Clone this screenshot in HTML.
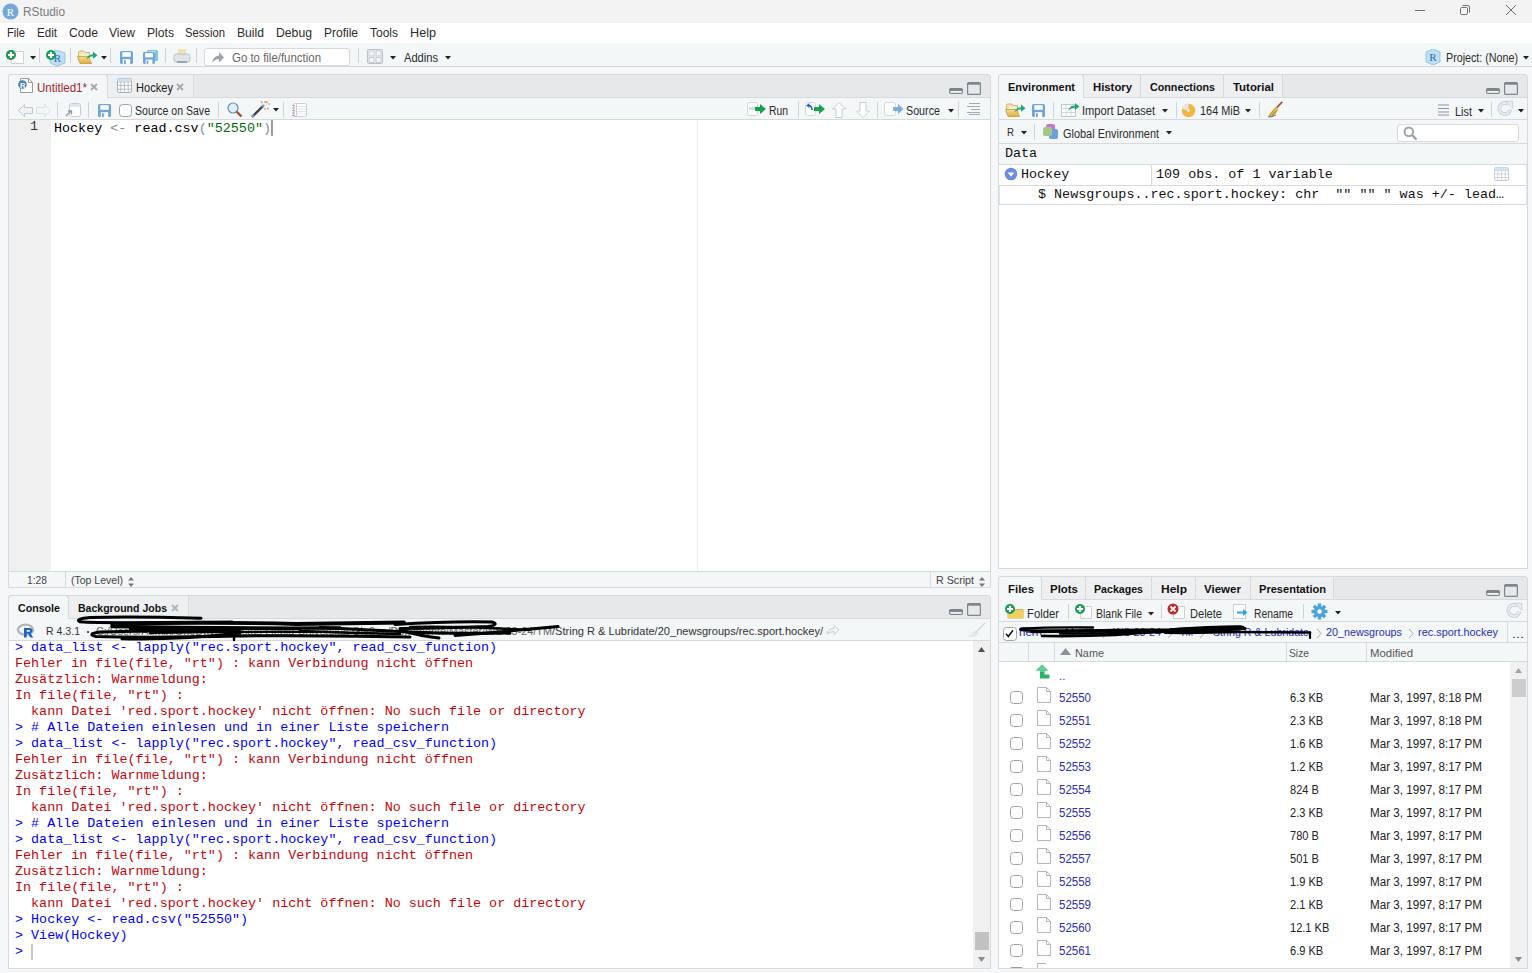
<!DOCTYPE html>
<html><head><meta charset="utf-8"><title>RStudio</title>
<style>
html,body{margin:0;padding:0;}
body{width:1532px;height:973px;position:relative;overflow:hidden;background:#f6f7f9;font-family:'Liberation Sans',sans-serif;}
body>div,body>svg{position:absolute;}
.t{overflow:visible}
</style></head><body>
<div style="left:0px;top:0px;width:1532px;height:23px;background:#f3f3f3;"></div>
<svg style="left:2px;top:3px" width="17" height="17" viewBox="0 0 17 17"><circle cx="8.5" cy="8.5" r="8" fill="#75a8da"/><text x="8.5" y="12.6" font-family="Liberation Serif" font-size="11" fill="#fff" text-anchor="middle">R</text></svg>
<div class="t" style="left:23px;top:6px;font:normal 12.5px 'Liberation Sans',sans-serif;color:#7b7b7b;line-height:1;white-space:pre;transform:scaleX(0.9442);transform-origin:0 0;">RStudio</div>
<div style="left:1415px;top:10px;width:10px;height:1px;background:#707070;"></div>
<svg style="left:1459px;top:4px" width="13" height="13" viewBox="0 0 13 13"><rect x="1.5" y="3.5" width="7" height="7" rx="1.2" fill="none" stroke="#707070"/><path d="M3.5 1.5h5.5a1.5 1.5 0 0 1 1.5 1.5v5.5" fill="none" stroke="#707070"/></svg>
<svg style="left:1505px;top:4px" width="13" height="13" viewBox="0 0 13 13"><path d="M1 1L11 11M11 1L1 11" stroke="#707070" stroke-width="1"/></svg>
<div style="left:0px;top:23px;width:1532px;height:20px;background:#ffffff;"></div>
<div class="t" style="left:7px;top:27px;font:normal 12px 'Liberation Sans',sans-serif;color:#2b2b2b;line-height:1;white-space:pre;transform:scaleX(0.9305);transform-origin:0 0;">File</div>
<div class="t" style="left:37px;top:27px;font:normal 12px 'Liberation Sans',sans-serif;color:#2b2b2b;line-height:1;white-space:pre;transform:scaleX(0.9668);transform-origin:0 0;">Edit</div>
<div class="t" style="left:69px;top:27px;font:normal 12px 'Liberation Sans',sans-serif;color:#2b2b2b;line-height:1;white-space:pre;transform:scaleX(1.0109);transform-origin:0 0;">Code</div>
<div class="t" style="left:109px;top:27px;font:normal 12px 'Liberation Sans',sans-serif;color:#2b2b2b;line-height:1;white-space:pre;transform:scaleX(1.0079);transform-origin:0 0;">View</div>
<div class="t" style="left:147px;top:27px;font:normal 12px 'Liberation Sans',sans-serif;color:#2b2b2b;line-height:1;white-space:pre;transform:scaleX(1.0117);transform-origin:0 0;">Plots</div>
<div class="t" style="left:185px;top:27px;font:normal 12px 'Liberation Sans',sans-serif;color:#2b2b2b;line-height:1;white-space:pre;transform:scaleX(0.9367);transform-origin:0 0;">Session</div>
<div class="t" style="left:237px;top:27px;font:normal 12px 'Liberation Sans',sans-serif;color:#2b2b2b;line-height:1;white-space:pre;transform:scaleX(1.0117);transform-origin:0 0;">Build</div>
<div class="t" style="left:276px;top:27px;font:normal 12px 'Liberation Sans',sans-serif;color:#2b2b2b;line-height:1;white-space:pre;transform:scaleX(1.0177);transform-origin:0 0;">Debug</div>
<div class="t" style="left:324px;top:27px;font:normal 12px 'Liberation Sans',sans-serif;color:#2b2b2b;line-height:1;white-space:pre;transform:scaleX(0.9995);transform-origin:0 0;">Profile</div>
<div class="t" style="left:370px;top:27px;font:normal 12px 'Liberation Sans',sans-serif;color:#2b2b2b;line-height:1;white-space:pre;transform:scaleX(0.9994);transform-origin:0 0;">Tools</div>
<div class="t" style="left:410px;top:27px;font:normal 12px 'Liberation Sans',sans-serif;color:#2b2b2b;line-height:1;white-space:pre;transform:scaleX(1.0532);transform-origin:0 0;">Help</div>
<div style="left:0px;top:43px;width:1532px;height:23px;background:#f3f7f8;"></div>
<div style="left:0px;top:66px;width:1532px;height:1px;background:#d3d7db;"></div>
<div style="left:8px;top:74px;width:983px;height:514px;background:#d6dadd;border-radius:4px 4px 0 0;"></div>
<div style="left:9px;top:75px;width:981px;height:22px;background:#e7e8ea;border-radius:3px 3px 0 0;"></div>
<div style="left:9px;top:97px;width:981px;height:1px;background:#d6dadd;"></div>
<div style="left:9px;top:98px;width:981px;height:21px;background:#f3f7f8;"></div>
<div style="left:9px;top:119px;width:981px;height:1px;background:#d6dadd;"></div>
<div style="left:9px;top:120px;width:42px;height:451px;background:#f0f0f0;"></div>
<div style="left:51px;top:120px;width:939px;height:451px;background:#ffffff;"></div>
<div style="left:697px;top:120px;width:1px;height:451px;background:#ebebeb;"></div>
<div style="left:9px;top:571px;width:981px;height:1px;background:#d6dadd;"></div>
<div style="left:9px;top:572px;width:981px;height:15px;background:#f3f7f8;"></div>
<div style="left:65px;top:572px;width:1px;height:15px;background:#d6dadd;"></div>
<div style="left:930px;top:572px;width:1px;height:15px;background:#d6dadd;"></div>
<div style="left:8px;top:595px;width:983px;height:374px;background:#d6dadd;border-radius:4px 4px 0 0;"></div>
<div style="left:9px;top:596px;width:981px;height:22px;background:#e7e8ea;border-radius:3px 3px 0 0;"></div>
<div style="left:9px;top:618px;width:981px;height:1px;background:#d6dadd;"></div>
<div style="left:9px;top:619px;width:981px;height:21px;background:#f3f7f8;"></div>
<div style="left:9px;top:640px;width:981px;height:1px;background:#d6dadd;"></div>
<div style="left:9px;top:641px;width:981px;height:327px;background:#ffffff;"></div>
<div style="left:973px;top:641px;width:17px;height:327px;background:#f0f0f0;"></div>
<div style="left:998px;top:74px;width:530px;height:495px;background:#d6dadd;border-radius:4px 4px 0 0;"></div>
<div style="left:999px;top:75px;width:528px;height:22px;background:#e7e8ea;border-radius:3px 3px 0 0;"></div>
<div style="left:999px;top:97px;width:528px;height:1px;background:#d6dadd;"></div>
<div style="left:999px;top:98px;width:528px;height:21px;background:#f3f7f8;"></div>
<div style="left:999px;top:119px;width:528px;height:1px;background:#d6dadd;"></div>
<div style="left:999px;top:120px;width:528px;height:23px;background:#f3f7f8;"></div>
<div style="left:999px;top:143px;width:528px;height:1px;background:#d6dadd;"></div>
<div style="left:999px;top:144px;width:528px;height:20px;background:#f3f7f8;"></div>
<div style="left:999px;top:164px;width:528px;height:1px;background:#d6dadd;"></div>
<div style="left:999px;top:165px;width:528px;height:403px;background:#ffffff;"></div>
<div style="left:999px;top:185px;width:528px;height:1px;background:#d6dadd;"></div>
<div style="left:999px;top:204px;width:528px;height:1px;background:#d6dadd;"></div>
<div style="left:998px;top:576px;width:530px;height:393px;background:#d6dadd;border-radius:4px 4px 0 0;"></div>
<div style="left:999px;top:577px;width:528px;height:22px;background:#e7e8ea;border-radius:3px 3px 0 0;"></div>
<div style="left:999px;top:599px;width:528px;height:1px;background:#d6dadd;"></div>
<div style="left:999px;top:600px;width:528px;height:21px;background:#f3f7f8;"></div>
<div style="left:999px;top:621px;width:528px;height:1px;background:#d6dadd;"></div>
<div style="left:999px;top:622px;width:528px;height:20px;background:#f3f7f8;"></div>
<div style="left:999px;top:642px;width:528px;height:1px;background:#d6dadd;"></div>
<div style="left:999px;top:643px;width:528px;height:18px;background:#f3f7f8;"></div>
<div style="left:999px;top:661px;width:528px;height:1px;background:#d6dadd;"></div>
<div style="left:999px;top:662px;width:528px;height:306px;background:#ffffff;"></div>
<div style="left:1510px;top:662px;width:17px;height:306px;background:#f1f1f1;"></div>
<svg style="left:5px;top:49px" width="12" height="12" viewBox="0 0 12 12"><circle cx="6" cy="6" r="5" fill="#1e9b57"/><path d="M6 3.0V9.0M3.0 6H9.0" stroke="#fff" stroke-width="2.2"/></svg>
<svg style="left:11px;top:51px" width="13" height="13" viewBox="0 0 13 13"><path d="M0.5 0.5H12.5L12.5 0.5V12.5H0.5Z" fill="#fff" stroke="#cfcfcf"/><path d="M12.5 0.5V0.5H12.5" fill="none" stroke="#cfcfcf"/></svg>
<svg style="left:5px;top:49px" width="12" height="12" viewBox="0 0 12 12"><circle cx="6" cy="6" r="5" fill="#1e9b57"/><path d="M6 3.0V9.0M3.0 6H9.0" stroke="#fff" stroke-width="2.2"/></svg>
<svg style="left:30px;top:56px" width="6" height="4" viewBox="0 0 6 4"><path d="M0 0H6L3 3.5Z" fill="#222"/></svg>
<div style="left:39px;top:48px;width:1px;height:15px;background:#d0d4d8;"></div>
<svg style="left:49px;top:50px" width="17" height="17" viewBox="0 0 17 17"><path d="M1 3L8 0L16 3V13L8 16L1 13Z" fill="#bfe0f3" stroke="#7fc0e2" stroke-width="0.8"/><text x="8.5" y="12" font-family="Liberation Serif" font-size="11" fill="#2f6aa6" text-anchor="middle">R</text></svg>
<svg style="left:45px;top:49px" width="12" height="12" viewBox="0 0 12 12"><circle cx="6" cy="6" r="5" fill="#1e9b57"/><path d="M6 3.0V9.0M3.0 6H9.0" stroke="#fff" stroke-width="2.2"/></svg>
<div style="left:70px;top:48px;width:1px;height:15px;background:#d0d4d8;"></div>
<svg style="left:77px;top:50px" width="21" height="14" viewBox="0 0 21 14"><defs><linearGradient id="fg" x1="0" y1="0" x2="0" y2="1"><stop offset="0" stop-color="#f6df8e"/><stop offset="1" stop-color="#dcae3c"/></linearGradient></defs><path d="M1.5 2.5Q1.5 1 3 1H7L8.5 2.5H12.5V9H1.5Z" fill="#f5e6b0" stroke="#c9a445" stroke-width="0.8"/><path d="M3.5 3.5H11.5V9H3.5Z" fill="#ececec"/><path d="M0.5 6.5H11.5L14.5 13.5H3Z" fill="url(#fg)" stroke="#c59a35" stroke-width="0.8"/><path d="M9 9.5Q11 4.5 16 4.2V1.5L20.5 5.2L16 8.8V6.3Q12.5 6.3 9 9.5Z" fill="#1fa77a"/></svg>
<svg style="left:101px;top:56px" width="6" height="4" viewBox="0 0 6 4"><path d="M0 0H6L3 3.5Z" fill="#222"/></svg>
<div style="left:110px;top:48px;width:1px;height:15px;background:#d0d4d8;"></div>
<svg style="left:120px;top:51px" width="13" height="13" viewBox="0 0 13 13"><g transform="scale(1.000)"><rect x="0" y="0" width="13" height="13" rx="1.6" fill="#6fa5d7"/><rect x="2.3" y="1.2" width="8.4" height="4.6" fill="#fff"/><rect x="2.8" y="8.2" width="7.4" height="4.8" fill="#fff"/><rect x="4" y="9.2" width="1.8" height="3.8" fill="#6fa5d7"/></g></svg>
<svg style="left:143px;top:50px" width="16" height="15" viewBox="0 0 16 15"><rect x="4" y="0" width="11" height="11" rx="1.2" fill="#7cc6ea"/><rect x="6" y="1.5" width="6" height="4" fill="#fff"/></svg>
<svg style="left:143px;top:52px" width="12" height="12" viewBox="0 0 12 12"><g transform="scale(0.923)"><rect x="0" y="0" width="13" height="13" rx="1.6" fill="#6fa5d7"/><rect x="2.3" y="1.2" width="8.4" height="4.6" fill="#fff"/><rect x="2.8" y="8.2" width="7.4" height="4.8" fill="#fff"/><rect x="4" y="9.2" width="1.8" height="3.8" fill="#6fa5d7"/></g></svg>
<div style="left:165px;top:48px;width:1px;height:15px;background:#d0d4d8;"></div>
<svg style="left:173px;top:48px" width="18" height="16" viewBox="0 0 18 16"><rect x="5" y="1" width="8" height="7" fill="#f1e3b3"/><rect x="1" y="6" width="16" height="8" rx="2" fill="#dfe4ea" stroke="#aeb6bf" stroke-width="0.8"/><rect x="4" y="13" width="10" height="2" fill="#9aa3ad"/></svg>
<div style="left:196px;top:48px;width:1px;height:15px;background:#d0d4d8;"></div>
<div style="left:204px;top:48px;width:146px;height:18px;background:#ffffff;border:1px solid #d5d9dd;border-radius:3px;box-sizing:border-box;"></div>
<svg style="left:211px;top:51px" width="14" height="13" viewBox="0 0 14 13"><path d="M1 12Q2 5 8 4.5V1L13 6.5L8 11.5V8Q4 8 1 12Z" fill="#9ba3ad"/></svg>
<div class="t" style="left:232px;top:52px;font:normal 12px 'Liberation Sans',sans-serif;color:#666;line-height:1;white-space:pre;transform:scaleX(0.9530);transform-origin:0 0;">Go to file/function</div>
<div style="left:358px;top:48px;width:1px;height:15px;background:#d0d4d8;"></div>
<svg style="left:367px;top:49px" width="16" height="15" viewBox="0 0 16 15"><rect x="0.5" y="0.5" width="15" height="14" rx="1" fill="none" stroke="#b9c0c7"/><rect x="2" y="2" width="5" height="5" fill="none" stroke="#c5cbd1"/><rect x="9" y="2" width="5" height="5" fill="none" stroke="#c5cbd1"/><rect x="2" y="8.5" width="5" height="5" fill="none" stroke="#c5cbd1"/><rect x="9" y="8.5" width="5" height="5" fill="none" stroke="#c5cbd1"/></svg>
<svg style="left:390px;top:56px" width="6" height="4" viewBox="0 0 6 4"><path d="M0 0H6L3 3.5Z" fill="#222"/></svg>
<div class="t" style="left:404px;top:52px;font:normal 12px 'Liberation Sans',sans-serif;color:#2b2b2b;line-height:1;white-space:pre;transform:scaleX(0.9264);transform-origin:0 0;">Addins</div>
<svg style="left:445px;top:56px" width="6" height="4" viewBox="0 0 6 4"><path d="M0 0H6L3 3.5Z" fill="#222"/></svg>
<svg style="left:1425px;top:49px" width="16" height="16" viewBox="0 0 16 16"><path d="M1 3L8 0L15 3V13L8 16L1 13Z" fill="#bfe0f3" stroke="#7fc0e2" stroke-width="0.8"/><text x="8" y="12" font-family="Liberation Serif" font-size="11" fill="#2f6aa6" text-anchor="middle">R</text></svg>
<div class="t" style="left:1446px;top:52px;font:normal 12px 'Liberation Sans',sans-serif;color:#2b2b2b;line-height:1;white-space:pre;transform:scaleX(0.8922);transform-origin:0 0;">Project: (None)</div>
<svg style="left:1523px;top:56px" width="6" height="4" viewBox="0 0 6 4"><path d="M0 0H6L3 3.5Z" fill="#222"/></svg>
<div style="left:8px;top:74px;width:100px;height:24px;background:#d6dadd;border-radius:4px 4px 0 0;"></div>
<div style="left:9px;top:75px;width:98px;height:23px;background:#f3f7f8;border-radius:3px 3px 0 0;"></div>
<div style="left:108px;top:75px;width:85px;height:22px;background:#eeeff1;"></div>
<div style="left:193px;top:75px;width:1px;height:22px;background:#d6dadd;"></div>
<svg style="left:20px;top:78px" width="13" height="15" viewBox="0 0 13 15"><path d="M0.5 0.5H8.5L12.5 4.5V14.5H0.5Z" fill="#fff" stroke="#9a9a9a"/><path d="M8.5 0.5V4.5H12.5" fill="none" stroke="#9a9a9a"/></svg>
<svg style="left:18px;top:80px" width="10" height="10" viewBox="0 0 10 10"><circle cx="4.5" cy="4.5" r="4.3" fill="#4a80be"/><text x="4.6" y="7.6" font-family="Liberation Sans" font-weight="bold" font-size="7.5" fill="#fff" text-anchor="middle">R</text></svg>
<div class="t" style="left:37px;top:82px;font:normal 12px 'Liberation Sans',sans-serif;color:#a3232e;line-height:1;white-space:pre;transform:scaleX(0.9610);transform-origin:0 0;">Untitled1*</div>
<svg style="left:90px;top:83px" width="8" height="8" viewBox="0 0 8 8"><path d="M1 1L7 7M7 1L1 7" stroke="#a9a9a9" stroke-width="1.8"/></svg>
<svg style="left:117px;top:78px" width="16" height="16" viewBox="0 0 16 16"><rect x="0.5" y="0.5" width="14" height="14" rx="1.5" fill="#fff" stroke="#a9b0b8"/><path d="M3.8 0V15M0 3.8H15" stroke="#a9b0b8" stroke-width="0.8"/><path d="M7.5 0V15M0 7.5H15" stroke="#a9b0b8" stroke-width="0.8"/><path d="M11.2 0V15M0 11.2H15" stroke="#a9b0b8" stroke-width="0.8"/><rect x="0.5" y="0.5" width="14" height="3" fill="#cfe3f5"/></svg>
<div class="t" style="left:136px;top:82px;font:normal 12px 'Liberation Sans',sans-serif;color:#222;line-height:1;white-space:pre;transform:scaleX(0.9246);transform-origin:0 0;">Hockey</div>
<svg style="left:176px;top:83px" width="8" height="8" viewBox="0 0 8 8"><path d="M1 1L7 7M7 1L1 7" stroke="#a9a9a9" stroke-width="1.8"/></svg>
<svg style="left:949px;top:82px" width="34" height="14" viewBox="0 0 34 14"><rect x="0.6" y="6.6" width="12.8" height="4.8" rx="1.2" fill="#fff" stroke="#7b868d" stroke-width="1.2"/><rect x="1" y="6.5" width="12" height="2.6" fill="#7b868d"/><rect x="18.6" y="0.6" width="12.8" height="11.8" rx="1" fill="none" stroke="#7b868d" stroke-width="1.2"/><rect x="19" y="0.5" width="12" height="2.2" fill="#7b868d"/></svg>
<svg style="left:18px;top:104px" width="33" height="13" viewBox="0 0 33 13"><path d="M0.5 6.5L6.5 0.5V3.5H14.5V9.5H6.5V12.5Z" fill="#f0f2f4" stroke="#c2c8ce"/><path d="M32.5 6.5L26.5 0.5V3.5H18.5V9.5H26.5V12.5Z" fill="#f3f5f7" stroke="#dde1e5"/></svg>
<div style="left:57px;top:102px;width:1px;height:16px;background:#d0d4d8;"></div>
<svg style="left:65px;top:103px" width="16" height="15" viewBox="0 0 16 15"><rect x="4.5" y="0.5" width="11" height="13" rx="2" fill="#fff" stroke="#c5ccd3"/><rect x="5" y="1" width="10" height="3" fill="#dbe6f0"/><path d="M1 13L6 8M3 8H6.5V11.5" stroke="#8e99a3" stroke-width="1.3" fill="none"/></svg>
<div style="left:88px;top:102px;width:1px;height:16px;background:#d0d4d8;"></div>
<svg style="left:98px;top:104px" width="13" height="13" viewBox="0 0 13 13"><g transform="scale(1.000)"><rect x="0" y="0" width="13" height="13" rx="1.6" fill="#6fa5d7"/><rect x="2.3" y="1.2" width="8.4" height="4.6" fill="#fff"/><rect x="2.8" y="8.2" width="7.4" height="4.8" fill="#fff"/><rect x="4" y="9.2" width="1.8" height="3.8" fill="#6fa5d7"/></g></svg>
<svg style="left:119px;top:104px" width="13" height="13" viewBox="0 0 13 13"><rect x="0.5" y="0.5" width="12" height="12" rx="3" fill="#fff" stroke="#a3a3a3"/></svg>
<div class="t" style="left:135px;top:105px;font:normal 12px 'Liberation Sans',sans-serif;color:#2b2b2b;line-height:1;white-space:pre;transform:scaleX(0.8783);transform-origin:0 0;">Source on Save</div>
<div style="left:218px;top:102px;width:1px;height:16px;background:#d0d4d8;"></div>
<svg style="left:227px;top:102px" width="16" height="16" viewBox="0 0 16 16"><circle cx="6" cy="6" r="5" fill="#dfeefa" stroke="#6d8fae" stroke-width="1.2"/><path d="M9.5 9.5L14.5 14.5" stroke="#a0522d" stroke-width="2.4"/></svg>
<svg style="left:250px;top:100px" width="20" height="18" viewBox="0 0 20 18"><path d="M2 17L13 6" stroke="#444" stroke-width="2.4"/><path d="M2 17L4 15" stroke="#5aa0d8" stroke-width="2.4"/><path d="M12 7L14 5" stroke="#5aa0d8" stroke-width="2.4"/><path d="M15 1V3M18 4H20M17.5 1.5L16 3M11 1.5L12.5 3M17 8L18.5 9.5M15 8V10" stroke="#f08a5d" stroke-width="1.1"/></svg>
<svg style="left:273px;top:108px" width="6" height="4" viewBox="0 0 6 4"><path d="M0 0H6L3 3.5Z" fill="#222"/></svg>
<div style="left:283px;top:102px;width:1px;height:16px;background:#d0d4d8;"></div>
<svg style="left:292px;top:103px" width="15" height="14" viewBox="0 0 15 14"><rect x="1.5" y="0.5" width="13" height="13" rx="1.5" fill="#fff" stroke="#c9cfd5"/><path d="M2 3.5H14M2 6H14M2 8.5H14M2 11H14" stroke="#dde7f2"/><path d="M4.5 1V13" stroke="#f3b3b3" stroke-width="0.8"/><path d="M0 2.5H3M0 5H3M0 7.5H3M0 10H3M0 12.5H3" stroke="#9aa1a8" stroke-width="0.8"/></svg>
<svg style="left:747px;top:102px" width="20" height="14" viewBox="0 0 20 14"><rect x="0.5" y="0.5" width="10" height="13" rx="2" fill="#fff" stroke="#d4d9de"/><path d="M2 6.5H8" stroke="#b8d2ec" stroke-width="2"/><path d="M8 5H13V2L19 7L13 12V9H8Z" fill="#17a24a"/></svg>
<div class="t" style="left:769px;top:105px;font:normal 12px 'Liberation Sans',sans-serif;color:#2b2b2b;line-height:1;white-space:pre;transform:scaleX(0.8630);transform-origin:0 0;">Run</div>
<div style="left:798px;top:102px;width:1px;height:16px;background:#d0d4d8;"></div>
<svg style="left:805px;top:102px" width="21" height="14" viewBox="0 0 21 14"><rect x="0.5" y="0.5" width="10" height="13" rx="2" fill="#fff" stroke="#d4d9de"/><path d="M7 8Q7 3.5 3.5 3.5" fill="none" stroke="#2a5fc9" stroke-width="1.6"/><path d="M1 3.5L4.5 1V6Z" fill="#2a5fc9"/><path d="M9 5H14V2L20 7L14 12V9H9Z" fill="#17a24a"/></svg>
<svg style="left:832px;top:102px" width="14" height="16" viewBox="0 0 14 16"><path d="M7 0.5L13.5 7H10V15.5H4V7H0.5Z" fill="#fff" stroke="#c8cdd2"/></svg>
<svg style="left:856px;top:102px" width="14" height="16" viewBox="0 0 14 16"><path d="M7 15.5L13.5 9H10V0.5H4V9H0.5Z" fill="#fff" stroke="#c8cdd2"/></svg>
<div style="left:877px;top:102px;width:1px;height:16px;background:#d0d4d8;"></div>
<svg style="left:884px;top:102px" width="20" height="14" viewBox="0 0 20 14"><rect x="0.5" y="0.5" width="11" height="13" rx="2" fill="#fff" stroke="#d4d9de"/><path d="M9 5H14V2L19.5 7L14 12V9H9Z" fill="#7aaede"/></svg>
<div class="t" style="left:906px;top:105px;font:normal 12px 'Liberation Sans',sans-serif;color:#2b2b2b;line-height:1;white-space:pre;transform:scaleX(0.8940);transform-origin:0 0;">Source</div>
<svg style="left:948px;top:109px" width="6" height="4" viewBox="0 0 6 4"><path d="M0 0H6L3 3.5Z" fill="#222"/></svg>
<div style="left:958px;top:102px;width:1px;height:16px;background:#d0d4d8;"></div>
<svg style="left:967px;top:102px" width="14" height="13" viewBox="0 0 14 13"><path d="M2 1.5H13M0 4.5H13M4 7.5H13M0 10.5H13M2 12.5H13" stroke="#a3a9af" stroke-width="1"/></svg>
<div class="t" style="left:30px;top:120px;font:normal 13.4px 'Liberation Mono',monospace;color:#333;line-height:1;white-space:pre;">1</div>
<div class="t" style="left:54px;top:122px;font:13.4px 'Liberation Mono',monospace;line-height:1;white-space:pre;color:#000">Hockey <span style="color:#888">&lt;-</span> read.csv<span style="color:#7f8c99">(</span><span style="color:#036a07">"52550"</span><span style="color:#7f8c99">)</span></div>
<div style="left:271px;top:120px;width:2px;height:16px;background:#9a9a9a;"></div>
<div class="t" style="left:27px;top:575px;font:normal 11px 'Liberation Sans',sans-serif;color:#444;line-height:1;white-space:pre;transform:scaleX(0.9336);transform-origin:0 0;">1:28</div>
<div class="t" style="left:71px;top:575px;font:normal 11px 'Liberation Sans',sans-serif;color:#444;line-height:1;white-space:pre;transform:scaleX(0.9555);transform-origin:0 0;">(Top Level)</div>
<svg style="left:128px;top:577px" width="6" height="10" viewBox="0 0 6 10"><path d="M0 3.5L3 0L6 3.5Z M0 6.5L3 10L6 6.5Z" fill="#777"/></svg>
<div class="t" style="left:936px;top:575px;font:normal 11px 'Liberation Sans',sans-serif;color:#444;line-height:1;white-space:pre;transform:scaleX(0.9712);transform-origin:0 0;">R Script</div>
<svg style="left:979px;top:577px" width="6" height="10" viewBox="0 0 6 10"><path d="M0 3.5L3 0L6 3.5Z M0 6.5L3 10L6 6.5Z" fill="#777"/></svg>
<div style="left:8px;top:595px;width:61px;height:24px;background:#d6dadd;border-radius:4px 4px 0 0;"></div>
<div style="left:9px;top:596px;width:59px;height:23px;background:#f3f7f8;border-radius:3px 3px 0 0;"></div>
<div style="left:69px;top:596px;width:119px;height:22px;background:#eeeff1;"></div>
<div style="left:188px;top:596px;width:1px;height:22px;background:#d6dadd;"></div>
<div class="t" style="left:18px;top:603px;font:bold 11.5px 'Liberation Sans',sans-serif;color:#111;line-height:1;white-space:pre;transform:scaleX(0.9256);transform-origin:0 0;">Console</div>
<div class="t" style="left:78px;top:603px;font:bold 11.5px 'Liberation Sans',sans-serif;color:#111;line-height:1;white-space:pre;transform:scaleX(0.9162);transform-origin:0 0;">Background Jobs</div>
<svg style="left:171px;top:604px" width="8" height="8" viewBox="0 0 8 8"><path d="M1 1L7 7M7 1L1 7" stroke="#b5b5b5" stroke-width="1.8"/></svg>
<svg style="left:949px;top:603px" width="34" height="14" viewBox="0 0 34 14"><rect x="0.6" y="6.6" width="12.8" height="4.8" rx="1.2" fill="#fff" stroke="#7b868d" stroke-width="1.2"/><rect x="1" y="6.5" width="12" height="2.6" fill="#7b868d"/><rect x="18.6" y="0.6" width="12.8" height="11.8" rx="1" fill="none" stroke="#7b868d" stroke-width="1.2"/><rect x="19" y="0.5" width="12" height="2.2" fill="#7b868d"/></svg>
<svg style="left:15px;top:622px" width="21" height="17" viewBox="0 0 21 17"><ellipse cx="10.5" cy="7.7" rx="7.6" ry="5" fill="none" stroke="#b4b6ba" stroke-width="2.3"/><path d="M9 6H14.5Q17.5 6 17.5 8.6Q17.5 10.6 15.5 11.2L18.2 15.6H15.2L13 11.6H11.7V15.6H9ZM11.7 8V9.8H14.2Q15 9.8 15 8.9Q15 8 14.2 8Z" fill="#1f63c6"/></svg>
<div class="t" style="left:46px;top:626px;font:normal 11.5px 'Liberation Sans',sans-serif;color:#333;line-height:1;white-space:pre;transform:scaleX(0.9170);transform-origin:0 0;">R 4.3.1</div>
<div style="left:87px;top:631px;width:2px;height:2px;background:#555;"></div>
<div class="t" style="left:96px;top:626px;font:normal 11.5px 'Liberation Sans',sans-serif;color:#666;line-height:1;white-space:pre;transform:scaleX(0.9425);transform-origin:0 0;">C:/Users/Admin/OneDrive - Justus-Liebig-Universität Gießen/Dokumente/Master/WS 23-24/TM</div>
<div class="t" style="left:552px;top:626px;font:normal 11.5px 'Liberation Sans',sans-serif;color:#333;line-height:1;white-space:pre;transform:scaleX(0.9613);transform-origin:0 0;">/String R &amp; Lubridate/20_newsgroups/rec.sport.hockey/</div>
<svg style="left:826px;top:625px" width="14" height="10" viewBox="0 0 14 10"><path d="M1 9Q2 3.5 8 3.5V0.5L13 5L8 9.5V6.5Q4 6.5 1 9Z" fill="none" stroke="#c5cbd1" stroke-width="1"/></svg>
<svg style="left:966px;top:622px" width="20" height="16" viewBox="0 0 20 16"><path d="M19 1L11.5 8.5" stroke="#d3d9de" stroke-width="1.4"/><path d="M11 8L13 10L9 14.5Q5 15.5 1.5 14.5Q6 12 8 9.5Z" fill="#dfe4e8"/><path d="M3 14L8 11M5 14.5L9.5 11.5" stroke="#eef1f3" stroke-width="0.8"/></svg>
<svg style="left:0px;top:600px" width="600" height="50" viewBox="0 0 600 50"><g transform="translate(0,-600)" fill="none" stroke="#000" stroke-linecap="round" stroke-linejoin="round"><path stroke-width="3" d="M201 618.3Q130 616 90 617.5Q74 619 80 621.8Q100 623.5 232 622"/><path stroke-width="3.8" d="M112 624Q200 621.5 296 624Q350 623 404 622.5"/><path stroke-width="3.4" d="M112 626.5Q220 628.5 340 628"/><path stroke-width="3" d="M240 630.5Q160 630 100 632Q86 634 96 636.5Q150 638 240 636Q300 635 410 637"/><path stroke-width="3" d="M122 638.8Q180 640 240 633"/><path stroke-width="2.4" d="M234 632V640"/><path stroke-width="3" d="M320 627.5Q370 630 410 632Q450 634 510 633"/><path stroke-width="3" d="M395 624.5Q450 621 492 622Q500 624.5 488 626.5Q440 628 400 628.5"/><path stroke-width="3" d="M400 630Q420 636 439 638"/><path stroke-width="3" d="M455 635.5Q500 632 558 626.5"/><path stroke-width="2.6" d="M300 631Q350 633 400 634"/><path stroke-width="2.6" d="M130 629Q200 628 300 629"/><path stroke-width="2.2" d="M150 633Q230 631.5 320 632"/><path stroke-width="2.4" d="M410 627Q460 626 530 630"/></g></svg>
<div class="t" style="left:15px;top:641px;font:normal 13.4px 'Liberation Mono',monospace;color:#0000ff;line-height:1;white-space:pre;">&gt; data_list &lt;- lapply(&quot;rec.sport.hockey&quot;, read_csv_function)</div>
<div class="t" style="left:15px;top:657px;font:normal 13.4px 'Liberation Mono',monospace;color:#c5060b;line-height:1;white-space:pre;">Fehler in file(file, &quot;rt&quot;) : kann Verbindung nicht öffnen</div>
<div class="t" style="left:15px;top:673px;font:normal 13.4px 'Liberation Mono',monospace;color:#c5060b;line-height:1;white-space:pre;">Zusätzlich: Warnmeldung:</div>
<div class="t" style="left:15px;top:689px;font:normal 13.4px 'Liberation Mono',monospace;color:#c5060b;line-height:1;white-space:pre;">In file(file, &quot;rt&quot;) :</div>
<div class="t" style="left:15px;top:705px;font:normal 13.4px 'Liberation Mono',monospace;color:#c5060b;line-height:1;white-space:pre;">  kann Datei &#x27;red.sport.hockey&#x27; nicht öffnen: No such file or directory</div>
<div class="t" style="left:15px;top:721px;font:normal 13.4px 'Liberation Mono',monospace;color:#0000ff;line-height:1;white-space:pre;">&gt; # Alle Dateien einlesen und in einer Liste speichern</div>
<div class="t" style="left:15px;top:737px;font:normal 13.4px 'Liberation Mono',monospace;color:#0000ff;line-height:1;white-space:pre;">&gt; data_list &lt;- lapply(&quot;rec.sport.hockey&quot;, read_csv_function)</div>
<div class="t" style="left:15px;top:753px;font:normal 13.4px 'Liberation Mono',monospace;color:#c5060b;line-height:1;white-space:pre;">Fehler in file(file, &quot;rt&quot;) : kann Verbindung nicht öffnen</div>
<div class="t" style="left:15px;top:769px;font:normal 13.4px 'Liberation Mono',monospace;color:#c5060b;line-height:1;white-space:pre;">Zusätzlich: Warnmeldung:</div>
<div class="t" style="left:15px;top:785px;font:normal 13.4px 'Liberation Mono',monospace;color:#c5060b;line-height:1;white-space:pre;">In file(file, &quot;rt&quot;) :</div>
<div class="t" style="left:15px;top:801px;font:normal 13.4px 'Liberation Mono',monospace;color:#c5060b;line-height:1;white-space:pre;">  kann Datei &#x27;red.sport.hockey&#x27; nicht öffnen: No such file or directory</div>
<div class="t" style="left:15px;top:817px;font:normal 13.4px 'Liberation Mono',monospace;color:#0000ff;line-height:1;white-space:pre;">&gt; # Alle Dateien einlesen und in einer Liste speichern</div>
<div class="t" style="left:15px;top:833px;font:normal 13.4px 'Liberation Mono',monospace;color:#0000ff;line-height:1;white-space:pre;">&gt; data_list &lt;- lapply(&quot;rec.sport.hockey&quot;, read_csv_function)</div>
<div class="t" style="left:15px;top:849px;font:normal 13.4px 'Liberation Mono',monospace;color:#c5060b;line-height:1;white-space:pre;">Fehler in file(file, &quot;rt&quot;) : kann Verbindung nicht öffnen</div>
<div class="t" style="left:15px;top:865px;font:normal 13.4px 'Liberation Mono',monospace;color:#c5060b;line-height:1;white-space:pre;">Zusätzlich: Warnmeldung:</div>
<div class="t" style="left:15px;top:881px;font:normal 13.4px 'Liberation Mono',monospace;color:#c5060b;line-height:1;white-space:pre;">In file(file, &quot;rt&quot;) :</div>
<div class="t" style="left:15px;top:897px;font:normal 13.4px 'Liberation Mono',monospace;color:#c5060b;line-height:1;white-space:pre;">  kann Datei &#x27;red.sport.hockey&#x27; nicht öffnen: No such file or directory</div>
<div class="t" style="left:15px;top:913px;font:normal 13.4px 'Liberation Mono',monospace;color:#0000ff;line-height:1;white-space:pre;">&gt; Hockey &lt;- read.csv(&quot;52550&quot;)</div>
<div class="t" style="left:15px;top:929px;font:normal 13.4px 'Liberation Mono',monospace;color:#0000ff;line-height:1;white-space:pre;">&gt; View(Hockey)</div>
<div class="t" style="left:15px;top:945px;font:normal 13.4px 'Liberation Mono',monospace;color:#0000ff;line-height:1;white-space:pre;">&gt; </div>
<div style="left:31px;top:944px;width:2px;height:16px;background:#c8c8c8;"></div>
<svg style="left:978px;top:647px" width="7" height="5" viewBox="0 0 7 5"><path d="M0 5L3.5 0L7 5Z" fill="#505050"/></svg>
<div style="left:975px;top:932px;width:14px;height:18px;background:#c1c1c1;"></div>
<svg style="left:978px;top:957px" width="7" height="5" viewBox="0 0 7 5"><path d="M0 0L3.5 5L7 0Z" fill="#8a8a8a"/></svg>
<div style="left:998px;top:74px;width:86px;height:24px;background:#d6dadd;border-radius:4px 4px 0 0;"></div>
<div style="left:999px;top:75px;width:84px;height:23px;background:#f3f7f8;border-radius:3px 3px 0 0;"></div>
<div style="left:1084px;top:75px;width:56px;height:22px;background:#eeeff1;"></div>
<div style="left:1140px;top:75px;width:1px;height:22px;background:#d6dadd;"></div>
<div style="left:1141px;top:75px;width:82px;height:22px;background:#eeeff1;"></div>
<div style="left:1223px;top:75px;width:1px;height:22px;background:#d6dadd;"></div>
<div style="left:1224px;top:75px;width:58px;height:22px;background:#eeeff1;"></div>
<div style="left:1282px;top:75px;width:1px;height:22px;background:#d6dadd;"></div>
<div class="t" style="left:1008px;top:82px;font:bold 11.5px 'Liberation Sans',sans-serif;color:#111;line-height:1;white-space:pre;transform:scaleX(0.9531);transform-origin:0 0;">Environment</div>
<div class="t" style="left:1093px;top:82px;font:bold 11.5px 'Liberation Sans',sans-serif;color:#111;line-height:1;white-space:pre;transform:scaleX(0.9842);transform-origin:0 0;">History</div>
<div class="t" style="left:1150px;top:82px;font:bold 11.5px 'Liberation Sans',sans-serif;color:#111;line-height:1;white-space:pre;transform:scaleX(0.9334);transform-origin:0 0;">Connections</div>
<div class="t" style="left:1233px;top:82px;font:bold 11.5px 'Liberation Sans',sans-serif;color:#111;line-height:1;white-space:pre;transform:scaleX(0.9924);transform-origin:0 0;">Tutorial</div>
<svg style="left:1486px;top:82px" width="34" height="14" viewBox="0 0 34 14"><rect x="0.6" y="6.6" width="12.8" height="4.8" rx="1.2" fill="#fff" stroke="#7b868d" stroke-width="1.2"/><rect x="1" y="6.5" width="12" height="2.6" fill="#7b868d"/><rect x="18.6" y="0.6" width="12.8" height="11.8" rx="1" fill="none" stroke="#7b868d" stroke-width="1.2"/><rect x="19" y="0.5" width="12" height="2.2" fill="#7b868d"/></svg>
<svg style="left:1005px;top:103px" width="21" height="14" viewBox="0 0 21 14"><defs><linearGradient id="fg" x1="0" y1="0" x2="0" y2="1"><stop offset="0" stop-color="#f6df8e"/><stop offset="1" stop-color="#dcae3c"/></linearGradient></defs><path d="M1.5 2.5Q1.5 1 3 1H7L8.5 2.5H12.5V9H1.5Z" fill="#f5e6b0" stroke="#c9a445" stroke-width="0.8"/><path d="M3.5 3.5H11.5V9H3.5Z" fill="#ececec"/><path d="M0.5 6.5H11.5L14.5 13.5H3Z" fill="url(#fg)" stroke="#c59a35" stroke-width="0.8"/><path d="M9 9.5Q11 4.5 16 4.2V1.5L20.5 5.2L16 8.8V6.3Q12.5 6.3 9 9.5Z" fill="#1fa77a"/></svg>
<svg style="left:1032px;top:104px" width="13" height="13" viewBox="0 0 13 13"><g transform="scale(1.000)"><rect x="0" y="0" width="13" height="13" rx="1.6" fill="#6fa5d7"/><rect x="2.3" y="1.2" width="8.4" height="4.6" fill="#fff"/><rect x="2.8" y="8.2" width="7.4" height="4.8" fill="#fff"/><rect x="4" y="9.2" width="1.8" height="3.8" fill="#6fa5d7"/></g></svg>
<div style="left:1053px;top:102px;width:1px;height:16px;background:#d0d4d8;"></div>
<svg style="left:1061px;top:102px" width="19" height="15" viewBox="0 0 19 15"><rect x="0.5" y="2.5" width="14" height="12" fill="#fff" stroke="#b4bcc4" stroke-width="0.8"/><path d="M0.5 6.5H14.5M0.5 10.5H14.5M5 2.5V14.5M10 2.5V14.5" stroke="#c8ced4" stroke-width="0.8"/><path d="M7 9Q9 3 14 3.5V1L18.5 4.5L14 8V5.8Q10 5.5 7 9Z" fill="#21a57a"/></svg>
<div class="t" style="left:1082px;top:105px;font:normal 12px 'Liberation Sans',sans-serif;color:#2b2b2b;line-height:1;white-space:pre;transform:scaleX(0.9275);transform-origin:0 0;">Import Dataset</div>
<svg style="left:1162px;top:109px" width="6" height="4" viewBox="0 0 6 4"><path d="M0 0H6L3 3.5Z" fill="#222"/></svg>
<div style="left:1176px;top:102px;width:1px;height:16px;background:#d0d4d8;"></div>
<svg style="left:1181px;top:103px" width="15" height="15" viewBox="0 0 15 15"><circle cx="7.5" cy="7.5" r="6.8" fill="#f3b544"/><path d="M7.5 7.5V0.7A6.8 6.8 0 0 0 0.9 6Z" fill="#e6e6e6"/><circle cx="7.5" cy="7.5" r="1.2" fill="#fff"/></svg>
<div class="t" style="left:1200px;top:105px;font:normal 12px 'Liberation Sans',sans-serif;color:#2b2b2b;line-height:1;white-space:pre;transform:scaleX(0.9084);transform-origin:0 0;">164 MiB</div>
<svg style="left:1245px;top:109px" width="6" height="4" viewBox="0 0 6 4"><path d="M0 0H6L3 3.5Z" fill="#222"/></svg>
<div style="left:1259px;top:102px;width:1px;height:16px;background:#d0d4d8;"></div>
<svg style="left:1267px;top:101px" width="16" height="17" viewBox="0 0 16 17"><path d="M15.2 0.8L9.5 7" stroke="#b8473e" stroke-width="1.8"/><path d="M8.8 6L11.2 8.4L8.5 13.5Q4.5 16 0.8 15.5Q3.5 12 6.2 8.2Z" fill="#d9b45a"/><path d="M2.5 14.5L6.5 9.5M4.5 15L8 10.5M6.5 14L9.5 10" stroke="#b58d32" stroke-width="0.7"/><path d="M1 16Q5 16.5 9 14" stroke="#8c8c8c" stroke-width="1"/></svg>
<svg style="left:1438px;top:104px" width="12" height="12" viewBox="0 0 12 12"><path d="M0 1H11M0 4.5H11M0 8H11M0 11H11" stroke="#8d9399" stroke-width="1"/></svg>
<div class="t" style="left:1455px;top:106px;font:normal 12px 'Liberation Sans',sans-serif;color:#2b2b2b;line-height:1;white-space:pre;transform:scaleX(0.9097);transform-origin:0 0;">List</div>
<svg style="left:1478px;top:109px" width="6" height="4" viewBox="0 0 6 4"><path d="M0 0H6L3 3.5Z" fill="#222"/></svg>
<div style="left:1491px;top:102px;width:1px;height:15px;background:#d0d4d8;"></div>
<svg style="left:1497px;top:100px" width="17" height="17" viewBox="0 0 17 17"><path d="M13.4 9.5A5.6 5.6 0 1 1 11.2 4" fill="none" stroke="#c3cbd8" stroke-width="3.6"/><path d="M13.4 9.5A5.6 5.6 0 1 1 11.2 4" fill="none" stroke="#e6ecf6" stroke-width="2"/><path d="M8.6 1.2H15.8V8.4Z" fill="#e6ecf6" stroke="#c3cbd8" stroke-width="0.8"/></svg>
<svg style="left:1518px;top:109px" width="6" height="4" viewBox="0 0 6 4"><path d="M0 0H6L3 3.5Z" fill="#222"/></svg>
<div class="t" style="left:1007px;top:127px;font:normal 11.5px 'Liberation Sans',sans-serif;color:#2b2b2b;line-height:1;white-space:pre;transform:scaleX(0.8421);transform-origin:0 0;">R</div>
<svg style="left:1021px;top:131px" width="6" height="4" viewBox="0 0 6 4"><path d="M0 0H6L3 3.5Z" fill="#222"/></svg>
<div style="left:1034px;top:124px;width:1px;height:16px;background:#d0d4d8;"></div>
<svg style="left:1043px;top:124px" width="16" height="16" viewBox="0 0 16 16"><rect x="3" y="0" width="9" height="9" rx="2" fill="#c07ad0"/><rect x="6" y="5" width="9" height="10" rx="2" fill="#6a9fe0"/><rect x="0" y="3" width="9" height="9" rx="2" fill="#a3c784"/></svg>
<div class="t" style="left:1063px;top:128px;font:normal 12px 'Liberation Sans',sans-serif;color:#2b2b2b;line-height:1;white-space:pre;transform:scaleX(0.9109);transform-origin:0 0;">Global Environment</div>
<svg style="left:1166px;top:131px" width="6" height="4" viewBox="0 0 6 4"><path d="M0 0H6L3 3.5Z" fill="#222"/></svg>
<div style="left:1397px;top:124px;width:122px;height:18px;background:#fff;border:1px solid #d5d9dd;border-radius:3px;box-sizing:border-box;"></div>
<svg style="left:1403px;top:126px" width="15" height="15" viewBox="0 0 15 15"><circle cx="5.8" cy="5.8" r="4.3" fill="none" stroke="#9aa0a6" stroke-width="1.9"/><path d="M9 9L13.5 13.5" stroke="#9aa0a6" stroke-width="2.4"/></svg>
<div class="t" style="left:1005px;top:147px;font:normal 13.4px 'Liberation Mono',monospace;color:#111;line-height:1;white-space:pre;">Data</div>
<svg style="left:1004px;top:167px" width="14" height="14" viewBox="0 0 14 14"><circle cx="7" cy="7" r="6.3" fill="#6c8ee0"/><path d="M3.5 5.5H10.5L7 9.5Z" fill="#fff"/></svg>
<div class="t" style="left:1021px;top:168px;font:normal 13.4px 'Liberation Mono',monospace;color:#111;line-height:1;white-space:pre;">Hockey</div>
<div style="left:1151px;top:165px;width:1px;height:20px;background:#d6dadd;"></div>
<div class="t" style="left:1156px;top:168px;font:normal 13.4px 'Liberation Mono',monospace;color:#111;line-height:1;white-space:pre;">109 obs. of 1 variable</div>
<svg style="left:1494px;top:167px" width="16" height="15" viewBox="0 0 16 15"><rect x="0.5" y="0.5" width="14" height="13" rx="1.5" fill="#fff" stroke="#c5ccd3"/><path d="M3.8 0V14M0 3.5H15" stroke="#c5ccd3" stroke-width="0.8"/><path d="M7.5 0V14M0 7.0H15" stroke="#c5ccd3" stroke-width="0.8"/><path d="M11.2 0V14M0 10.5H15" stroke="#c5ccd3" stroke-width="0.8"/><rect x="0.5" y="0.5" width="14" height="3" fill="#cfe3f5"/></svg>
<div class="t" style="left:1038px;top:188px;font:normal 13.4px 'Liberation Mono',monospace;color:#111;line-height:1;white-space:pre;">$ Newsgroups..rec.sport.hockey: chr  &quot;&quot; &quot;&quot; &quot; was +/- lead…</div>
<div style="left:999px;top:186px;width:1px;height:18px;background:#e3e6e9;"></div>
<div style="left:1526px;top:165px;width:1px;height:39px;background:#e3e6e9;"></div>
<div style="left:998px;top:576px;width:44px;height:24px;background:#d6dadd;border-radius:4px 4px 0 0;"></div>
<div style="left:999px;top:577px;width:42px;height:23px;background:#f3f7f8;border-radius:3px 3px 0 0;"></div>
<div style="left:1042px;top:577px;width:43px;height:22px;background:#eeeff1;"></div>
<div style="left:1085px;top:577px;width:1px;height:22px;background:#d6dadd;"></div>
<div style="left:1086px;top:577px;width:65px;height:22px;background:#eeeff1;"></div>
<div style="left:1151px;top:577px;width:1px;height:22px;background:#d6dadd;"></div>
<div style="left:1152px;top:577px;width:43px;height:22px;background:#eeeff1;"></div>
<div style="left:1195px;top:577px;width:1px;height:22px;background:#d6dadd;"></div>
<div style="left:1196px;top:577px;width:54px;height:22px;background:#eeeff1;"></div>
<div style="left:1250px;top:577px;width:1px;height:22px;background:#d6dadd;"></div>
<div style="left:1251px;top:577px;width:82px;height:22px;background:#eeeff1;"></div>
<div style="left:1333px;top:577px;width:1px;height:22px;background:#d6dadd;"></div>
<div class="t" style="left:1008px;top:584px;font:bold 11.5px 'Liberation Sans',sans-serif;color:#111;line-height:1;white-space:pre;transform:scaleX(0.9917);transform-origin:0 0;">Files</div>
<div class="t" style="left:1050px;top:584px;font:bold 11.5px 'Liberation Sans',sans-serif;color:#111;line-height:1;white-space:pre;transform:scaleX(0.9956);transform-origin:0 0;">Plots</div>
<div class="t" style="left:1094px;top:584px;font:bold 11.5px 'Liberation Sans',sans-serif;color:#111;line-height:1;white-space:pre;transform:scaleX(0.9232);transform-origin:0 0;">Packages</div>
<div class="t" style="left:1161px;top:584px;font:bold 11.5px 'Liberation Sans',sans-serif;color:#111;line-height:1;white-space:pre;transform:scaleX(1.0433);transform-origin:0 0;">Help</div>
<div class="t" style="left:1204px;top:584px;font:bold 11.5px 'Liberation Sans',sans-serif;color:#111;line-height:1;white-space:pre;transform:scaleX(1.0034);transform-origin:0 0;">Viewer</div>
<div class="t" style="left:1259px;top:584px;font:bold 11.5px 'Liberation Sans',sans-serif;color:#111;line-height:1;white-space:pre;transform:scaleX(0.9617);transform-origin:0 0;">Presentation</div>
<svg style="left:1486px;top:584px" width="34" height="14" viewBox="0 0 34 14"><rect x="0.6" y="6.6" width="12.8" height="4.8" rx="1.2" fill="#fff" stroke="#7b868d" stroke-width="1.2"/><rect x="1" y="6.5" width="12" height="2.6" fill="#7b868d"/><rect x="18.6" y="0.6" width="12.8" height="11.8" rx="1" fill="none" stroke="#7b868d" stroke-width="1.2"/><rect x="19" y="0.5" width="12" height="2.2" fill="#7b868d"/></svg>
<svg style="left:1004px;top:603px" width="21" height="16" viewBox="0 0 21 16"><path d="M4 5H10L11.5 6.5H19V15H4Z" fill="#e9c96a" stroke="#c9a445" stroke-width="0.8"/><path d="M4 8H20L19 15H4Z" fill="#f0cf63"/></svg>
<svg style="left:1004px;top:603px" width="12" height="12" viewBox="0 0 12 12"><circle cx="6" cy="6" r="5" fill="#1e9b57"/><path d="M6 3.0V9.0M3.0 6H9.0" stroke="#fff" stroke-width="2.2"/></svg>
<div class="t" style="left:1027px;top:608px;font:normal 12px 'Liberation Sans',sans-serif;color:#2b2b2b;line-height:1;white-space:pre;transform:scaleX(0.9407);transform-origin:0 0;">Folder</div>
<div style="left:1068px;top:604px;width:1px;height:15px;background:#d0d4d8;"></div>
<svg style="left:1080px;top:606px" width="12" height="13" viewBox="0 0 12 13"><path d="M0.5 0.5H11.5L11.5 0.5V12.5H0.5Z" fill="#fff" stroke="#d0d0d0"/><path d="M11.5 0.5V0.5H11.5" fill="none" stroke="#d0d0d0"/></svg>
<svg style="left:1074px;top:603px" width="12" height="12" viewBox="0 0 12 12"><circle cx="6" cy="6" r="5" fill="#1e9b57"/><path d="M6 3.0V9.0M3.0 6H9.0" stroke="#fff" stroke-width="2.2"/></svg>
<div class="t" style="left:1096px;top:608px;font:normal 12px 'Liberation Sans',sans-serif;color:#2b2b2b;line-height:1;white-space:pre;transform:scaleX(0.8731);transform-origin:0 0;">Blank File</div>
<svg style="left:1148px;top:612px" width="6" height="4" viewBox="0 0 6 4"><path d="M0 0H6L3 3.5Z" fill="#222"/></svg>
<div style="left:1161px;top:604px;width:1px;height:15px;background:#d0d4d8;"></div>
<svg style="left:1173px;top:606px" width="12" height="13" viewBox="0 0 12 13"><path d="M0.5 0.5H11.5L11.5 0.5V12.5H0.5Z" fill="#fff" stroke="#d0d0d0"/><path d="M11.5 0.5V0.5H11.5" fill="none" stroke="#d0d0d0"/></svg>
<svg style="left:1167px;top:603px" width="12" height="12" viewBox="0 0 12 12"><circle cx="6" cy="6" r="5.5" fill="#c0282d"/><path d="M3.5 3.5L8.5 8.5M8.5 3.5L3.5 8.5" stroke="#fff" stroke-width="1.8"/></svg>
<div class="t" style="left:1190px;top:608px;font:normal 12px 'Liberation Sans',sans-serif;color:#2b2b2b;line-height:1;white-space:pre;transform:scaleX(0.9225);transform-origin:0 0;">Delete</div>
<svg style="left:1233px;top:604px" width="18" height="15" viewBox="0 0 18 15"><rect x="0.5" y="0.5" width="12" height="14" fill="#fff" stroke="#c9cfd5"/><path d="M4 7.5H10V5L14.5 8.5L10 12V9.5H4Z" fill="#2ea2e0"/></svg>
<div class="t" style="left:1254px;top:608px;font:normal 12px 'Liberation Sans',sans-serif;color:#2b2b2b;line-height:1;white-space:pre;transform:scaleX(0.8598);transform-origin:0 0;">Rename</div>
<div style="left:1303px;top:604px;width:1px;height:15px;background:#d0d4d8;"></div>
<svg style="left:1311px;top:603px" width="17" height="17" viewBox="0 0 17 17"><g transform="translate(8.5 8.5)"><circle r="5.6" fill="#4aa3d9"/><rect x="-1.7" y="-8" width="3.4" height="4" fill="#4aa3d9" transform="rotate(0)"/><rect x="-1.7" y="-8" width="3.4" height="4" fill="#4aa3d9" transform="rotate(45)"/><rect x="-1.7" y="-8" width="3.4" height="4" fill="#4aa3d9" transform="rotate(90)"/><rect x="-1.7" y="-8" width="3.4" height="4" fill="#4aa3d9" transform="rotate(135)"/><rect x="-1.7" y="-8" width="3.4" height="4" fill="#4aa3d9" transform="rotate(180)"/><rect x="-1.7" y="-8" width="3.4" height="4" fill="#4aa3d9" transform="rotate(225)"/><rect x="-1.7" y="-8" width="3.4" height="4" fill="#4aa3d9" transform="rotate(270)"/><rect x="-1.7" y="-8" width="3.4" height="4" fill="#4aa3d9" transform="rotate(315)"/><circle r="2.3" fill="#fff"/></g></svg>
<svg style="left:1335px;top:611px" width="6" height="4" viewBox="0 0 6 4"><path d="M0 0H6L3 3.5Z" fill="#222"/></svg>
<svg style="left:1506px;top:602px" width="17" height="17" viewBox="0 0 17 17"><path d="M13.4 9.5A5.6 5.6 0 1 1 11.2 4" fill="none" stroke="#c3cbd8" stroke-width="3.6"/><path d="M13.4 9.5A5.6 5.6 0 1 1 11.2 4" fill="none" stroke="#e6ecf6" stroke-width="2"/><path d="M8.6 1.2H15.8V8.4Z" fill="#e6ecf6" stroke="#c3cbd8" stroke-width="0.8"/></svg>
<svg style="left:1003px;top:627px" width="14" height="14" viewBox="0 0 14 14"><rect x="0.5" y="0.5" width="13" height="13" rx="3" fill="#fff" stroke="#a3a3a3"/><path d="M3 6.8L5.3 9.5L10 3.2" fill="none" stroke="#111" stroke-width="1.5"/></svg>
<div class="t" style="left:1019px;top:627px;font:normal 11.5px 'Liberation Sans',sans-serif;color:#2e2eb0;line-height:1;white-space:pre;transform:scaleX(1.0052);transform-origin:0 0;">nerre</div>
<div class="t" style="left:1065px;top:627px;font:normal 11.5px 'Liberation Sans',sans-serif;color:#2e2eb0;line-height:1;white-space:pre;transform:scaleX(0.9387);transform-origin:0 0;">Master</div>
<div class="t" style="left:1113px;top:627px;font:normal 11.5px 'Liberation Sans',sans-serif;color:#2e2eb0;line-height:1;white-space:pre;transform:scaleX(0.9386);transform-origin:0 0;">WS 23-24</div>
<div class="t" style="left:1180px;top:627px;font:normal 11.5px 'Liberation Sans',sans-serif;color:#2e2eb0;line-height:1;white-space:pre;transform:scaleX(0.7827);transform-origin:0 0;">TM</div>
<div class="t" style="left:1213px;top:627px;font:normal 11.5px 'Liberation Sans',sans-serif;color:#2e2eb0;line-height:1;white-space:pre;transform:scaleX(0.9270);transform-origin:0 0;">String R &amp; Lubridate</div>
<svg style="left:1102px;top:628px" width="6" height="11" viewBox="0 0 6 11"><path d="M1 1L5 5.5L1 10" fill="none" stroke="#a9a9a9" stroke-width="1"/></svg>
<svg style="left:1167px;top:628px" width="6" height="11" viewBox="0 0 6 11"><path d="M1 1L5 5.5L1 10" fill="none" stroke="#a9a9a9" stroke-width="1"/></svg>
<svg style="left:1199px;top:628px" width="6" height="11" viewBox="0 0 6 11"><path d="M1 1L5 5.5L1 10" fill="none" stroke="#a9a9a9" stroke-width="1"/></svg>
<svg style="left:1000px;top:615px" width="330" height="35" viewBox="0 0 330 35"><g transform="translate(-1000,-615)" fill="none" stroke="#000" stroke-linecap="round" stroke-linejoin="round"><path stroke-width="2.4" d="M1093 627.5Q1050 627 1022 628.5Q1016 630 1030 630.5Q1080 631 1120 630"/><path stroke-width="3.4" d="M1032 631.5Q1100 631 1170 630Q1210 628 1243 627.5"/><path stroke-width="2.6" d="M1042 636Q1080 636.5 1115 635Q1140 633 1170 631.5Q1240 632 1310 632.5"/><path stroke-width="2.4" d="M1170 629.5Q1210 626.5 1240 626.5Q1248 628 1235 629.5Q1200 631 1180 632"/><path stroke-width="2.2" d="M1310 632.5V638"/><path stroke-width="2.4" d="M1060 633.5Q1100 634 1150 632"/><path stroke-width="3" d="M1150 631Q1190 630 1245 628.5"/><path stroke-width="2.2" d="M1165 633Q1200 633.5 1240 632"/></g></svg>
<svg style="left:1408px;top:628px" width="6" height="11" viewBox="0 0 6 11"><path d="M1 1L5 5.5L1 10" fill="none" stroke="#a9a9a9" stroke-width="1"/></svg>
<svg style="left:1316px;top:628px" width="6" height="11" viewBox="0 0 6 11"><path d="M1 1L5 5.5L1 10" fill="none" stroke="#a9a9a9" stroke-width="1"/></svg>
<div class="t" style="left:1326px;top:627px;font:normal 11.5px 'Liberation Sans',sans-serif;color:#2e2eb0;line-height:1;white-space:pre;transform:scaleX(0.9359);transform-origin:0 0;">20_newsgroups</div>
<div class="t" style="left:1418px;top:627px;font:normal 11.5px 'Liberation Sans',sans-serif;color:#2e2eb0;line-height:1;white-space:pre;transform:scaleX(0.9481);transform-origin:0 0;">rec.sport.hockey</div>
<div style="left:1507px;top:622px;width:1px;height:20px;background:#d6dadd;"></div>
<div class="t" style="left:1512px;top:629px;font:normal 11.5px 'Liberation Sans',sans-serif;color:#333;line-height:1;white-space:pre;transform:scaleX(1.2508);transform-origin:0 0;">...</div>
<div style="left:1028px;top:643px;width:1px;height:18px;background:#d6dadd;"></div>
<div style="left:1054px;top:643px;width:1px;height:18px;background:#d6dadd;"></div>
<div style="left:1286px;top:643px;width:1px;height:18px;background:#d6dadd;"></div>
<div style="left:1366px;top:643px;width:1px;height:18px;background:#d6dadd;"></div>
<svg style="left:1060px;top:648px" width="11" height="8" viewBox="0 0 11 8"><path d="M0 7L5.5 0L11 7Z" fill="#8a939c"/></svg>
<div class="t" style="left:1075px;top:648px;font:normal 11.5px 'Liberation Sans',sans-serif;color:#555;line-height:1;white-space:pre;transform:scaleX(0.9450);transform-origin:0 0;">Name</div>
<div class="t" style="left:1289px;top:648px;font:normal 11.5px 'Liberation Sans',sans-serif;color:#555;line-height:1;white-space:pre;transform:scaleX(0.8939);transform-origin:0 0;">Size</div>
<div class="t" style="left:1370px;top:648px;font:normal 11.5px 'Liberation Sans',sans-serif;color:#555;line-height:1;white-space:pre;transform:scaleX(0.9892);transform-origin:0 0;">Modified</div>
<svg style="left:1035px;top:664px" width="15" height="15" viewBox="0 0 15 15"><path d="M7 0.5L13 6.5H9.5V10.5H14.5V14.5H5V6.5H1Z" fill="#2fb36a"/><path d="M7 0.5L13 6.5H9.5V8H5V6.5H1Z" fill="#5fd08f"/></svg>
<div class="t" style="left:1059px;top:671px;font:normal 11.5px 'Liberation Sans',sans-serif;color:#2e2eb0;line-height:1;white-space:pre;">..</div>
<svg style="left:1010px;top:691px" width="13" height="13" viewBox="0 0 13 13"><rect x="0.5" y="0.5" width="12" height="12" rx="3" fill="#fff" stroke="#a3a3a3"/></svg>
<svg style="left:1037px;top:687px" width="14" height="16" viewBox="0 0 14 16"><path d="M0.5 0.5H9.5L13.5 4.5V15.5H0.5Z" fill="#fff" stroke="#b5b5b5"/><path d="M9.5 0.5V4.5H13.5" fill="none" stroke="#b5b5b5"/></svg>
<div class="t" style="left:1059px;top:692px;font:normal 12px 'Liberation Sans',sans-serif;color:#2e2eb0;line-height:1;white-space:pre;transform:scaleX(0.9588);transform-origin:0 0;">52550</div>
<div class="t" style="left:1290px;top:692px;font:normal 12px 'Liberation Sans',sans-serif;color:#222;line-height:1;white-space:pre;transform:scaleX(0.92);transform-origin:0 0;">6.3 KB</div>
<div class="t" style="left:1370px;top:692px;font:normal 12px 'Liberation Sans',sans-serif;color:#222;line-height:1;white-space:pre;transform:scaleX(0.9705);transform-origin:0 0;">Mar 3, 1997, 8:18 PM</div>
<svg style="left:1010px;top:714px" width="13" height="13" viewBox="0 0 13 13"><rect x="0.5" y="0.5" width="12" height="12" rx="3" fill="#fff" stroke="#a3a3a3"/></svg>
<svg style="left:1037px;top:710px" width="14" height="16" viewBox="0 0 14 16"><path d="M0.5 0.5H9.5L13.5 4.5V15.5H0.5Z" fill="#fff" stroke="#b5b5b5"/><path d="M9.5 0.5V4.5H13.5" fill="none" stroke="#b5b5b5"/></svg>
<div class="t" style="left:1059px;top:715px;font:normal 12px 'Liberation Sans',sans-serif;color:#2e2eb0;line-height:1;white-space:pre;transform:scaleX(0.9588);transform-origin:0 0;">52551</div>
<div class="t" style="left:1290px;top:715px;font:normal 12px 'Liberation Sans',sans-serif;color:#222;line-height:1;white-space:pre;transform:scaleX(0.92);transform-origin:0 0;">2.3 KB</div>
<div class="t" style="left:1370px;top:715px;font:normal 12px 'Liberation Sans',sans-serif;color:#222;line-height:1;white-space:pre;transform:scaleX(0.9705);transform-origin:0 0;">Mar 3, 1997, 8:18 PM</div>
<svg style="left:1010px;top:737px" width="13" height="13" viewBox="0 0 13 13"><rect x="0.5" y="0.5" width="12" height="12" rx="3" fill="#fff" stroke="#a3a3a3"/></svg>
<svg style="left:1037px;top:733px" width="14" height="16" viewBox="0 0 14 16"><path d="M0.5 0.5H9.5L13.5 4.5V15.5H0.5Z" fill="#fff" stroke="#b5b5b5"/><path d="M9.5 0.5V4.5H13.5" fill="none" stroke="#b5b5b5"/></svg>
<div class="t" style="left:1059px;top:738px;font:normal 12px 'Liberation Sans',sans-serif;color:#2e2eb0;line-height:1;white-space:pre;transform:scaleX(0.9588);transform-origin:0 0;">52552</div>
<div class="t" style="left:1290px;top:738px;font:normal 12px 'Liberation Sans',sans-serif;color:#222;line-height:1;white-space:pre;transform:scaleX(0.92);transform-origin:0 0;">1.6 KB</div>
<div class="t" style="left:1370px;top:738px;font:normal 12px 'Liberation Sans',sans-serif;color:#222;line-height:1;white-space:pre;transform:scaleX(0.9705);transform-origin:0 0;">Mar 3, 1997, 8:17 PM</div>
<svg style="left:1010px;top:760px" width="13" height="13" viewBox="0 0 13 13"><rect x="0.5" y="0.5" width="12" height="12" rx="3" fill="#fff" stroke="#a3a3a3"/></svg>
<svg style="left:1037px;top:756px" width="14" height="16" viewBox="0 0 14 16"><path d="M0.5 0.5H9.5L13.5 4.5V15.5H0.5Z" fill="#fff" stroke="#b5b5b5"/><path d="M9.5 0.5V4.5H13.5" fill="none" stroke="#b5b5b5"/></svg>
<div class="t" style="left:1059px;top:761px;font:normal 12px 'Liberation Sans',sans-serif;color:#2e2eb0;line-height:1;white-space:pre;transform:scaleX(0.9588);transform-origin:0 0;">52553</div>
<div class="t" style="left:1290px;top:761px;font:normal 12px 'Liberation Sans',sans-serif;color:#222;line-height:1;white-space:pre;transform:scaleX(0.92);transform-origin:0 0;">1.2 KB</div>
<div class="t" style="left:1370px;top:761px;font:normal 12px 'Liberation Sans',sans-serif;color:#222;line-height:1;white-space:pre;transform:scaleX(0.9705);transform-origin:0 0;">Mar 3, 1997, 8:17 PM</div>
<svg style="left:1010px;top:783px" width="13" height="13" viewBox="0 0 13 13"><rect x="0.5" y="0.5" width="12" height="12" rx="3" fill="#fff" stroke="#a3a3a3"/></svg>
<svg style="left:1037px;top:779px" width="14" height="16" viewBox="0 0 14 16"><path d="M0.5 0.5H9.5L13.5 4.5V15.5H0.5Z" fill="#fff" stroke="#b5b5b5"/><path d="M9.5 0.5V4.5H13.5" fill="none" stroke="#b5b5b5"/></svg>
<div class="t" style="left:1059px;top:784px;font:normal 12px 'Liberation Sans',sans-serif;color:#2e2eb0;line-height:1;white-space:pre;transform:scaleX(0.9588);transform-origin:0 0;">52554</div>
<div class="t" style="left:1290px;top:784px;font:normal 12px 'Liberation Sans',sans-serif;color:#222;line-height:1;white-space:pre;transform:scaleX(0.92);transform-origin:0 0;">824 B</div>
<div class="t" style="left:1370px;top:784px;font:normal 12px 'Liberation Sans',sans-serif;color:#222;line-height:1;white-space:pre;transform:scaleX(0.9705);transform-origin:0 0;">Mar 3, 1997, 8:17 PM</div>
<svg style="left:1010px;top:806px" width="13" height="13" viewBox="0 0 13 13"><rect x="0.5" y="0.5" width="12" height="12" rx="3" fill="#fff" stroke="#a3a3a3"/></svg>
<svg style="left:1037px;top:802px" width="14" height="16" viewBox="0 0 14 16"><path d="M0.5 0.5H9.5L13.5 4.5V15.5H0.5Z" fill="#fff" stroke="#b5b5b5"/><path d="M9.5 0.5V4.5H13.5" fill="none" stroke="#b5b5b5"/></svg>
<div class="t" style="left:1059px;top:807px;font:normal 12px 'Liberation Sans',sans-serif;color:#2e2eb0;line-height:1;white-space:pre;transform:scaleX(0.9588);transform-origin:0 0;">52555</div>
<div class="t" style="left:1290px;top:807px;font:normal 12px 'Liberation Sans',sans-serif;color:#222;line-height:1;white-space:pre;transform:scaleX(0.92);transform-origin:0 0;">2.3 KB</div>
<div class="t" style="left:1370px;top:807px;font:normal 12px 'Liberation Sans',sans-serif;color:#222;line-height:1;white-space:pre;transform:scaleX(0.9705);transform-origin:0 0;">Mar 3, 1997, 8:17 PM</div>
<svg style="left:1010px;top:829px" width="13" height="13" viewBox="0 0 13 13"><rect x="0.5" y="0.5" width="12" height="12" rx="3" fill="#fff" stroke="#a3a3a3"/></svg>
<svg style="left:1037px;top:825px" width="14" height="16" viewBox="0 0 14 16"><path d="M0.5 0.5H9.5L13.5 4.5V15.5H0.5Z" fill="#fff" stroke="#b5b5b5"/><path d="M9.5 0.5V4.5H13.5" fill="none" stroke="#b5b5b5"/></svg>
<div class="t" style="left:1059px;top:830px;font:normal 12px 'Liberation Sans',sans-serif;color:#2e2eb0;line-height:1;white-space:pre;transform:scaleX(0.9588);transform-origin:0 0;">52556</div>
<div class="t" style="left:1290px;top:830px;font:normal 12px 'Liberation Sans',sans-serif;color:#222;line-height:1;white-space:pre;transform:scaleX(0.92);transform-origin:0 0;">780 B</div>
<div class="t" style="left:1370px;top:830px;font:normal 12px 'Liberation Sans',sans-serif;color:#222;line-height:1;white-space:pre;transform:scaleX(0.9705);transform-origin:0 0;">Mar 3, 1997, 8:17 PM</div>
<svg style="left:1010px;top:852px" width="13" height="13" viewBox="0 0 13 13"><rect x="0.5" y="0.5" width="12" height="12" rx="3" fill="#fff" stroke="#a3a3a3"/></svg>
<svg style="left:1037px;top:848px" width="14" height="16" viewBox="0 0 14 16"><path d="M0.5 0.5H9.5L13.5 4.5V15.5H0.5Z" fill="#fff" stroke="#b5b5b5"/><path d="M9.5 0.5V4.5H13.5" fill="none" stroke="#b5b5b5"/></svg>
<div class="t" style="left:1059px;top:853px;font:normal 12px 'Liberation Sans',sans-serif;color:#2e2eb0;line-height:1;white-space:pre;transform:scaleX(0.9588);transform-origin:0 0;">52557</div>
<div class="t" style="left:1290px;top:853px;font:normal 12px 'Liberation Sans',sans-serif;color:#222;line-height:1;white-space:pre;transform:scaleX(0.92);transform-origin:0 0;">501 B</div>
<div class="t" style="left:1370px;top:853px;font:normal 12px 'Liberation Sans',sans-serif;color:#222;line-height:1;white-space:pre;transform:scaleX(0.9705);transform-origin:0 0;">Mar 3, 1997, 8:17 PM</div>
<svg style="left:1010px;top:875px" width="13" height="13" viewBox="0 0 13 13"><rect x="0.5" y="0.5" width="12" height="12" rx="3" fill="#fff" stroke="#a3a3a3"/></svg>
<svg style="left:1037px;top:871px" width="14" height="16" viewBox="0 0 14 16"><path d="M0.5 0.5H9.5L13.5 4.5V15.5H0.5Z" fill="#fff" stroke="#b5b5b5"/><path d="M9.5 0.5V4.5H13.5" fill="none" stroke="#b5b5b5"/></svg>
<div class="t" style="left:1059px;top:876px;font:normal 12px 'Liberation Sans',sans-serif;color:#2e2eb0;line-height:1;white-space:pre;transform:scaleX(0.9588);transform-origin:0 0;">52558</div>
<div class="t" style="left:1290px;top:876px;font:normal 12px 'Liberation Sans',sans-serif;color:#222;line-height:1;white-space:pre;transform:scaleX(0.92);transform-origin:0 0;">1.9 KB</div>
<div class="t" style="left:1370px;top:876px;font:normal 12px 'Liberation Sans',sans-serif;color:#222;line-height:1;white-space:pre;transform:scaleX(0.9705);transform-origin:0 0;">Mar 3, 1997, 8:17 PM</div>
<svg style="left:1010px;top:898px" width="13" height="13" viewBox="0 0 13 13"><rect x="0.5" y="0.5" width="12" height="12" rx="3" fill="#fff" stroke="#a3a3a3"/></svg>
<svg style="left:1037px;top:894px" width="14" height="16" viewBox="0 0 14 16"><path d="M0.5 0.5H9.5L13.5 4.5V15.5H0.5Z" fill="#fff" stroke="#b5b5b5"/><path d="M9.5 0.5V4.5H13.5" fill="none" stroke="#b5b5b5"/></svg>
<div class="t" style="left:1059px;top:899px;font:normal 12px 'Liberation Sans',sans-serif;color:#2e2eb0;line-height:1;white-space:pre;transform:scaleX(0.9588);transform-origin:0 0;">52559</div>
<div class="t" style="left:1290px;top:899px;font:normal 12px 'Liberation Sans',sans-serif;color:#222;line-height:1;white-space:pre;transform:scaleX(0.92);transform-origin:0 0;">2.1 KB</div>
<div class="t" style="left:1370px;top:899px;font:normal 12px 'Liberation Sans',sans-serif;color:#222;line-height:1;white-space:pre;transform:scaleX(0.9705);transform-origin:0 0;">Mar 3, 1997, 8:17 PM</div>
<svg style="left:1010px;top:921px" width="13" height="13" viewBox="0 0 13 13"><rect x="0.5" y="0.5" width="12" height="12" rx="3" fill="#fff" stroke="#a3a3a3"/></svg>
<svg style="left:1037px;top:917px" width="14" height="16" viewBox="0 0 14 16"><path d="M0.5 0.5H9.5L13.5 4.5V15.5H0.5Z" fill="#fff" stroke="#b5b5b5"/><path d="M9.5 0.5V4.5H13.5" fill="none" stroke="#b5b5b5"/></svg>
<div class="t" style="left:1059px;top:922px;font:normal 12px 'Liberation Sans',sans-serif;color:#2e2eb0;line-height:1;white-space:pre;transform:scaleX(0.9588);transform-origin:0 0;">52560</div>
<div class="t" style="left:1290px;top:922px;font:normal 12px 'Liberation Sans',sans-serif;color:#222;line-height:1;white-space:pre;transform:scaleX(0.92);transform-origin:0 0;">12.1 KB</div>
<div class="t" style="left:1370px;top:922px;font:normal 12px 'Liberation Sans',sans-serif;color:#222;line-height:1;white-space:pre;transform:scaleX(0.9705);transform-origin:0 0;">Mar 3, 1997, 8:17 PM</div>
<svg style="left:1010px;top:944px" width="13" height="13" viewBox="0 0 13 13"><rect x="0.5" y="0.5" width="12" height="12" rx="3" fill="#fff" stroke="#a3a3a3"/></svg>
<svg style="left:1037px;top:940px" width="14" height="16" viewBox="0 0 14 16"><path d="M0.5 0.5H9.5L13.5 4.5V15.5H0.5Z" fill="#fff" stroke="#b5b5b5"/><path d="M9.5 0.5V4.5H13.5" fill="none" stroke="#b5b5b5"/></svg>
<div class="t" style="left:1059px;top:945px;font:normal 12px 'Liberation Sans',sans-serif;color:#2e2eb0;line-height:1;white-space:pre;transform:scaleX(0.9588);transform-origin:0 0;">52561</div>
<div class="t" style="left:1290px;top:945px;font:normal 12px 'Liberation Sans',sans-serif;color:#222;line-height:1;white-space:pre;transform:scaleX(0.92);transform-origin:0 0;">6.9 KB</div>
<div class="t" style="left:1370px;top:945px;font:normal 12px 'Liberation Sans',sans-serif;color:#222;line-height:1;white-space:pre;transform:scaleX(0.9705);transform-origin:0 0;">Mar 3, 1997, 8:17 PM</div>
<div style="left:1010px;top:967px;width:13px;height:2px;background:#9a9a9a;border-radius:3px 3px 0 0;"></div>
<div style="left:1037px;top:963px;width:9px;height:1px;background:#b5b5b5;"></div>
<div style="left:1037px;top:963px;width:1px;height:5px;background:#b5b5b5;"></div>
<div style="left:1000px;top:968px;width:527px;height:1px;background:#d6dadd;"></div>
<svg style="left:1515px;top:668px" width="7" height="5" viewBox="0 0 7 5"><path d="M0 5L3.5 0L7 5Z" fill="#a3a3a3"/></svg>
<div style="left:1512px;top:679px;width:14px;height:18px;background:#cdcdcd;"></div>
<svg style="left:1515px;top:957px" width="7" height="5" viewBox="0 0 7 5"><path d="M0 0L3.5 5L7 0Z" fill="#8a8a8a"/></svg>
</body></html>
